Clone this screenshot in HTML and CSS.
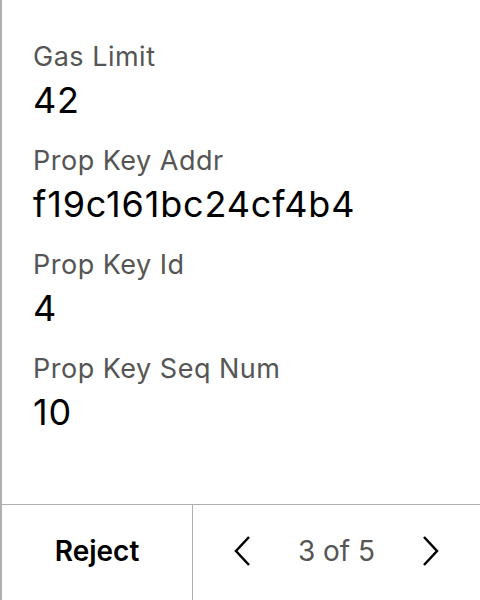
FILE: index.html
```html
<!DOCTYPE html>
<html>
<head>
<meta charset="utf-8">
<link rel="stylesheet" href="styles.css">
</head>
<body>
<div class="screen">
  <div class="content">
    <div class="field">
      <div class="label">Gas Limit</div>
      <div class="value">42</div>
    </div>
    <div class="field">
      <div class="label">Prop Key Addr</div>
      <div class="value">f19c161bc24cf4b4</div>
    </div>
    <div class="field">
      <div class="label">Prop Key Id</div>
      <div class="value">4</div>
    </div>
    <div class="field">
      <div class="label">Prop Key Seq Num</div>
      <div class="value">10</div>
    </div>
  </div>
  <div class="footer">
    <div class="reject">Reject</div>
    <div class="pager">
      <svg class="chev" width="20" height="32" viewBox="0 0 20 32"><path d="M16 2 L3 16 L16 30" fill="none" stroke="#000" stroke-width="2.5"/></svg>
      <span class="count">3 of 5</span>
      <svg class="chev" width="20" height="32" viewBox="0 0 20 32"><path d="M4 2 L17 16 L4 30" fill="none" stroke="#000" stroke-width="2.5"/></svg>
    </div>
  </div>
</div>
</body>
</html>
```
FILE: styles.css
```css
html, body {
  margin: 0;
  padding: 0;
  background: #fff;
}
.screen {
  width: 480px;
  height: 600px;
  box-sizing: border-box;
  border-left: 2px solid #b0b0b0;
  display: flex;
  flex-direction: column;
  font-family: Inter, "Noto Sans", sans-serif;
}
.content {
  flex: 1;
  padding: 40px 0 0 31px;
}
.field {
  margin-bottom: 18px;
}
.label {
  font-size: 27px;
  line-height: 34px;
  color: #555;
  letter-spacing: 0.5px;
}
.value {
  font-size: 36px;
  line-height: 52px;
  color: #000;
  letter-spacing: 0.85px;
}
.footer {
  height: 96px;
  box-sizing: border-box;
  border-top: 1px solid #b0b0b0;
  padding-bottom: 3px;
  display: flex;
}
.reject {
  width: 190px;
  border-right: 1px solid #b0b0b0;
  margin-bottom: -3px;
  padding-bottom: 3px;
  display: flex;
  align-items: center;
  justify-content: center;
  font-size: 28px;
  font-weight: 600;
  color: #000;
}
.pager {
  flex: 1;
  display: flex;
  align-items: center;
  justify-content: space-between;
  padding: 0 40px;
}
.count {
  font-size: 28px;
  color: #555;
}
```
